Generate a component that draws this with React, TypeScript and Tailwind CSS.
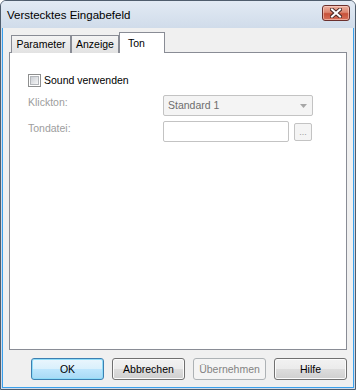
import React from 'react';

const btnBase =
  'w-[73px] h-[22px] rounded-[3px] border flex items-center justify-center text-[10.5px] leading-none';

const CloseGlyph: React.FC = () => (
  <svg width="12" height="10" viewBox="0 0 12 10">
    <path d="M2 1.5 L10 8.5 M10 1.5 L2 8.5" stroke="#4a2a28" strokeWidth="4" strokeLinecap="square" />
    <path d="M2 1.5 L10 8.5 M10 1.5 L2 8.5" stroke="#ffffff" strokeWidth="2" strokeLinecap="square" />
  </svg>
);

const App: React.FC = () => {
  return (
    <div className="w-[356px] h-[390px] flex flex-col border border-[#4f5d6d] rounded-t-[6px] overflow-hidden bg-[#cfdbea] font-['Liberation_Sans',Arial,sans-serif] text-black select-none">
      {/* title bar */}
      <div className="h-[27px] shrink-0 flex items-center justify-between pl-[6px] pr-[5px] bg-linear-to-b from-[#e2eaf4] to-[#d0dcea]">
        <span className="text-[11.5px] leading-none pt-[2px]">Verstecktes Eingabefeld</span>
        <button
          type="button"
          className="self-start mt-[4px] w-[28px] h-[16px] rounded-[3px] border border-[#6b302d] flex items-center justify-center bg-[linear-gradient(#ecb0a0,#dc8670_45%,#c7523a_55%,#d6705a)] shadow-[inset_0_0_0_1px_rgba(255,220,210,0.55)]"
        >
          <CloseGlyph />
        </button>
      </div>

      {/* body frame */}
      <div className="flex-1 flex flex-col px-[1px] pb-[1px]">
        <div className="flex-1 flex flex-col bg-[#f0f0f0] border-x border-b border-[#3aa0ec]">
          {/* tabs */}
          <div className="flex items-end pt-[4px] pl-[8px] -mb-[1px] relative z-10">
            <div className="w-[60px] h-[18px] border border-b-0 border-[#898c95] bg-linear-to-b from-[#f4f4f4] to-[#e2e2e2] flex items-center justify-center text-[10.5px] leading-none pb-[1px]">
              Parameter
            </div>
            <div className="w-[48px] h-[18px] border border-b-0 border-[#898c95] bg-linear-to-b from-[#f4f4f4] to-[#e2e2e2] flex items-center justify-center text-[10.5px] leading-none pb-[1px]">
              Anzeige
            </div>
            <div className="w-[46px] h-[21px] border border-b-0 border-[#898c95] bg-white flex items-start justify-start pl-[8px] text-[10.5px] leading-none pt-[5px]">
              Ton
            </div>
          </div>

          {/* panel */}
          <div className="ml-[6px] mr-[6px] h-[298px] border border-[#898c95] bg-white pt-[21px] pl-[18px]">
            <div className="flex items-center h-[13px]">
              <div className="w-[13px] h-[13px] border border-[#8e8f8f] bg-white p-[1px]">
                <div className="w-full h-full border border-[#b3b6ba] bg-linear-to-br from-[#cbcfd5] to-[#f6f6f6]" />
              </div>
              <span className="ml-[3px] text-[10.5px] leading-[13px]">Sound verwenden</span>
            </div>

            <div className="flex items-start mt-[8px]">
              <span className="w-[135px] pt-[1px] text-[10.5px] leading-[13px] text-[#9d9d9d]">Klickton:</span>
              <div className="w-[150px] h-[21px] rounded-[2px] border border-[#c3c3c3] bg-[#f4f4f4] flex items-center justify-between pl-[4px] pr-[5px]">
                <span className="text-[10.5px] leading-none text-[#6d6d6d]">Standard 1</span>
                <svg width="7" height="4" viewBox="0 0 7 4">
                  <path d="M0 0 H7 L3.5 4 Z" fill="#a6a6a6" />
                </svg>
              </div>
            </div>

            <div className="flex items-start mt-[5px]">
              <span className="w-[135px] pt-[1px] text-[10.5px] leading-[13px] text-[#9d9d9d]">Tondatei:</span>
              <div className="w-[126px] h-[21px] rounded-[2px] border border-[#c3c3c3] bg-white" />
              <div className="ml-[5px] mt-[2px] w-[18px] h-[18px] rounded-[2px] border border-[#c3c3c3] bg-[#f4f4f4] flex items-end justify-center pb-[3px] text-[9px] leading-none text-[#9d9d9d]">
                ...
              </div>
            </div>
          </div>

          {/* buttons */}
          <div className="flex justify-end gap-[8px] mt-[8px] mr-[6px]">
            <button
              type="button"
              className={`${btnBase} border-[#3c7fb1] bg-[linear-gradient(#eaf6fd,#d9f0fc_50%,#bee6fd_50%,#a7d9f5)] shadow-[inset_0_0_0_1px_#8fdcf8]`}
            >
              OK
            </button>
            <button
              type="button"
              className={`${btnBase} border-[#707070] bg-[linear-gradient(#f2f2f2,#ebebeb_50%,#dddddd_50%,#cfcfcf)] shadow-[inset_0_0_0_1px_#fbfbfb]`}
            >
              Abbrechen
            </button>
            <button
              type="button"
              className={`${btnBase} border-[#adb2b5] bg-[#f4f4f4] text-[#838383]`}
            >
              Übernehmen
            </button>
            <button
              type="button"
              className={`${btnBase} border-[#707070] bg-[linear-gradient(#f2f2f2,#ebebeb_50%,#dddddd_50%,#cfcfcf)] shadow-[inset_0_0_0_1px_#fbfbfb]`}
            >
              Hilfe
            </button>
          </div>
        </div>
      </div>
    </div>
  );
};

export default App;
